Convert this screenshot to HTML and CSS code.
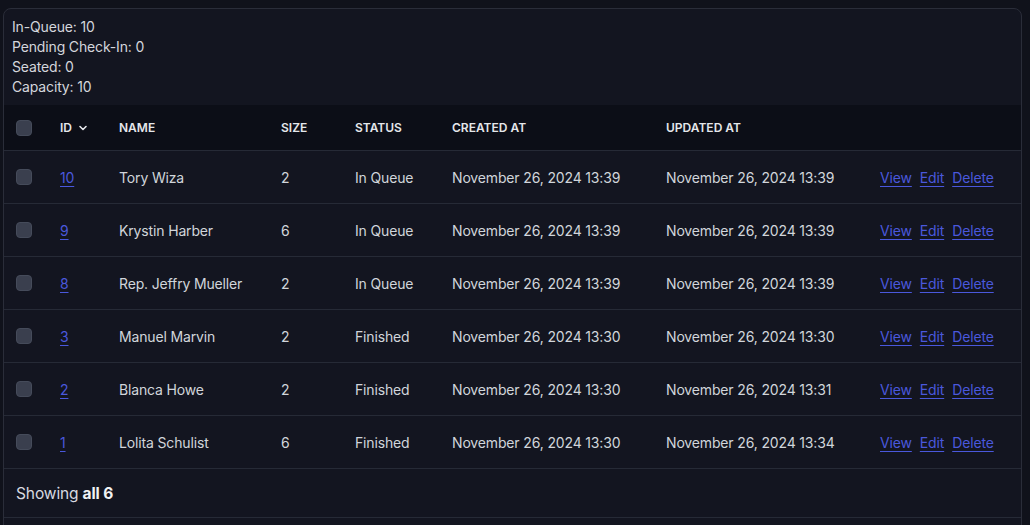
FILE: index.html
```html
<!DOCTYPE html>
<html>
<head>
<meta charset="utf-8">
<link rel="stylesheet" href="styles.css">
</head>
<body>
<div class="card">
  <div class="stats">
    <div>In-Queue: 10</div>
    <div>Pending Check-In: 0</div>
    <div>Seated: 0</div>
    <div>Capacity: 10</div>
  </div>
  <table class="grid">
    <colgroup>
      <col class="c-check"><col class="c-id"><col class="c-name"><col class="c-size"><col class="c-status"><col class="c-created"><col class="c-updated"><col class="c-actions">
    </colgroup>
    <thead>
      <tr>
        <th><span class="box"></span></th>
        <th><span class="sort">ID <svg class="chev" viewBox="0 0 10 10" width="10" height="10"><path d="M2 3.5 L5 6.5 L8 3.5" fill="none" stroke="currentColor" stroke-width="1.6" stroke-linecap="round" stroke-linejoin="round"/></svg></span></th>
        <th>Name</th>
        <th>Size</th>
        <th>Status</th>
        <th>Created At</th>
        <th>Updated At</th>
        <th></th>
      </tr>
    </thead>
    <tbody>
      <tr>
        <td><span class="box"></span></td>
        <td><a href="#">10</a></td>
        <td>Tory Wiza</td><td>2</td><td>In Queue</td>
        <td>November 26, 2024 13:39</td><td>November 26, 2024 13:39</td>
        <td><div class="actions"><a href="#">View</a><a href="#">Edit</a><a href="#">Delete</a></div></td>
      </tr>
      <tr>
        <td><span class="box"></span></td>
        <td><a href="#">9</a></td>
        <td>Krystin Harber</td><td>6</td><td>In Queue</td>
        <td>November 26, 2024 13:39</td><td>November 26, 2024 13:39</td>
        <td><div class="actions"><a href="#">View</a><a href="#">Edit</a><a href="#">Delete</a></div></td>
      </tr>
      <tr>
        <td><span class="box"></span></td>
        <td><a href="#">8</a></td>
        <td>Rep. Jeffry Mueller</td><td>2</td><td>In Queue</td>
        <td>November 26, 2024 13:39</td><td>November 26, 2024 13:39</td>
        <td><div class="actions"><a href="#">View</a><a href="#">Edit</a><a href="#">Delete</a></div></td>
      </tr>
      <tr>
        <td><span class="box"></span></td>
        <td><a href="#">3</a></td>
        <td>Manuel Marvin</td><td>2</td><td>Finished</td>
        <td>November 26, 2024 13:30</td><td>November 26, 2024 13:30</td>
        <td><div class="actions"><a href="#">View</a><a href="#">Edit</a><a href="#">Delete</a></div></td>
      </tr>
      <tr>
        <td><span class="box"></span></td>
        <td><a href="#">2</a></td>
        <td>Blanca Howe</td><td>2</td><td>Finished</td>
        <td>November 26, 2024 13:30</td><td>November 26, 2024 13:31</td>
        <td><div class="actions"><a href="#">View</a><a href="#">Edit</a><a href="#">Delete</a></div></td>
      </tr>
      <tr>
        <td><span class="box"></span></td>
        <td><a href="#">1</a></td>
        <td>Lolita Schulist</td><td>6</td><td>Finished</td>
        <td>November 26, 2024 13:30</td><td>November 26, 2024 13:34</td>
        <td><div class="actions"><a href="#">View</a><a href="#">Edit</a><a href="#">Delete</a></div></td>
      </tr>
    </tbody>
  </table>
  <div class="footer">Showing <b>all 6</b></div>
  <div class="more"></div>
</div>
</body>
</html>
```

FILE: styles.css
```css
html, body {
  margin: 0;
  background: #10121b;
}
body {
  padding: 8px 8px 0 3px;
  font-family: Inter, "Noto Sans", sans-serif;
  font-size: 14px;
  letter-spacing: -0.15px;
  color: #d1d5db;
  overflow: hidden;
}
.card {
  background: #131520;
  border: 1px solid #2a2d39;
  border-radius: 8px;
  overflow: hidden;
}
.stats {
  padding: 8px 8px 8px 8px;
  line-height: 20px;
  color: #d4d6dc;
}
.grid {
  width: 100%;
  border-collapse: collapse;
  table-layout: fixed;
}
.c-check { width: 44px; }
.c-id { width: 59px; }
.c-name { width: 162px; }
.c-size { width: 74px; }
.c-status { width: 97px; }
.c-created { width: 214px; }
.c-updated { width: 214px; }
thead tr {
  background: #0c0e17;
}
th {
  height: 45px;
  padding: 0 0 0 12px;
  text-align: left;
  font-size: 12px;
  font-weight: 600;
  text-transform: uppercase;
  color: #e5e7eb;
  letter-spacing: 0;
  border-bottom: 1px solid #262a36;
}
td {
  height: 52px;
  padding: 0 0 0 12px;
  color: #d1d5db;
  border-bottom: 1px solid #262a36;
  white-space: nowrap;
}
.box {
  display: block;
  width: 16px;
  height: 16px;
  border-radius: 4px;
  background: #3a3f4e;
  border: 1px solid #454b5a;
  box-sizing: border-box;
}
.sort {
  display: inline-flex;
  align-items: center;
  gap: 6px;
}
.chev {
  color: #e5e7eb;
}
a {
  color: #4a58dc;
  text-decoration: underline;
  text-underline-offset: 3px;
  text-decoration-thickness: 1px;
}
.actions {
  display: flex;
  gap: 8px;
}
.footer {
  height: 48px;
  display: flex;
  align-items: center;
  padding-left: 12px;
  font-size: 15.5px;
  letter-spacing: -0.1px;
  color: #d8dae0;
  border-bottom: 1px solid #262a36;
}
.footer b {
  font-weight: 700;
  color: #f1f2f4;
  margin-left: 4px;
}
.more {
  height: 40px;
}
```
